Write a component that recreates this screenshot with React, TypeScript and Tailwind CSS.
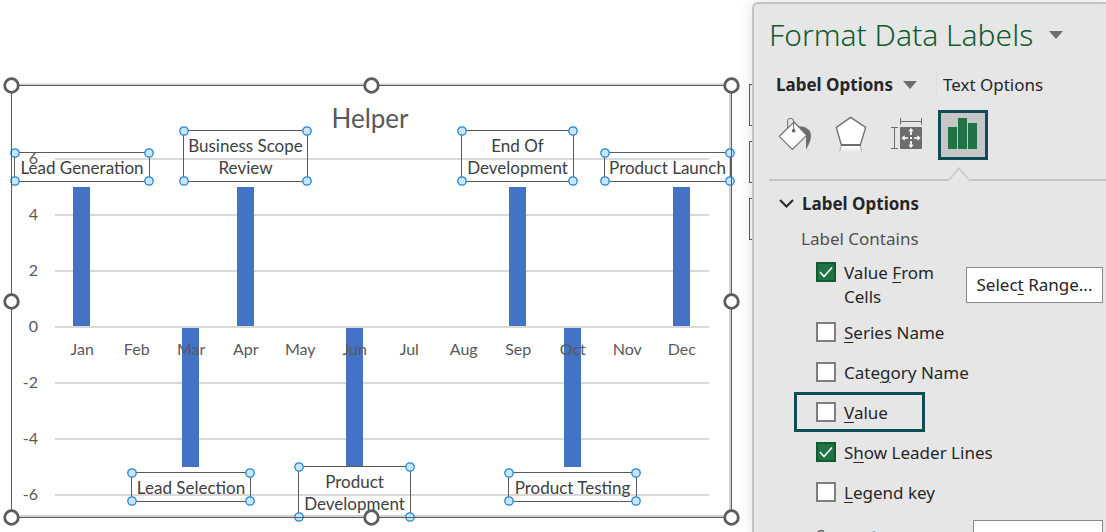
import { useState } from "react";
import type { ReactNode } from "react";

const MONTHS = ["Jan", "Feb", "Mar", "Apr", "May", "Jun", "Jul", "Aug", "Sep", "Oct", "Nov", "Dec"];
const TICKS = [6, 4, 2, 0, -2, -4, -6];

const PLOT_LEFT = 55;
const PLOT_WIDTH = 654;
const ZERO_Y = 250;
const UNIT = 28;

const BARS = [
  { month: 0, value: 5 },
  { month: 2, value: -5 },
  { month: 3, value: 5 },
  { month: 5, value: -5 },
  { month: 8, value: 5 },
  { month: 9, value: -5 },
  { month: 11, value: 5 },
];

const DATA_LABELS = [
  { lines: ["Lead Generation"], x: 15, y: 76, w: 134, h: 28 },
  { lines: ["Lead Selection"], x: 132, y: 396, w: 118, h: 28 },
  { lines: ["Business Scope", "Review"], x: 184, y: 54, w: 123, h: 50 },
  { lines: ["Product", "Development"], x: 299, y: 390, w: 111, h: 50 },
  { lines: ["End Of", "Development"], x: 462, y: 54, w: 111, h: 50 },
  { lines: ["Product Testing"], x: 509, y: 396, w: 127, h: 28 },
  { lines: ["Product Launch"], x: 605, y: 76, w: 125, h: 28 },
];

const FRAME_HANDLES = [
  [11, 8], [371, 8], [731, 8],
  [11, 224], [731, 224],
  [11, 440], [371, 440], [731, 440],
];

const centerOf = (month: number) => PLOT_LEFT + (PLOT_WIDTH / 12) * (month + 0.5);

const HelperChart = () => (
  <svg
    viewBox="0 0 749 455"
    className="min-w-0 flex-1 self-start font-['Lato','Liberation_Sans',sans-serif]"
    role="img"
    aria-label="Helper"
  >
    <path d="M11 7.5H730V439H11" fill="none" stroke="#d0d0d0" strokeWidth="2" />

    {/* Gridlines */}
    {TICKS.map((t) => (
      <rect key={t} x={PLOT_LEFT} y={ZERO_Y - t * UNIT - 1} width={PLOT_WIDTH} height="2" fill="#d9d9d9" />
    ))}

    {/* Bars */}
    {BARS.map((b) => (
      <rect
        key={b.month}
        x={Math.round(centerOf(b.month) - 9)}
        y={b.value > 0 ? ZERO_Y - b.value * UNIT : ZERO_Y + 1}
        width="17"
        height={Math.abs(b.value) * UNIT - 1}
        fill="#4472c4"
      />
    ))}

    <text x="370" y="51" textAnchor="middle" fontSize="26" fill="#595959">
      Helper
    </text>

    {/* Axis text */}
    {TICKS.map((t) => (
      <text key={t} x="38" y={ZERO_Y - t * UNIT + 5} textAnchor="end" fontSize="16" fill="#595959">
        {t}
      </text>
    ))}
    {MONTHS.map((m, i) => (
      <text key={m} x={centerOf(i)} y="278" textAnchor="middle" fontSize="16" fill="#595959">
        {m}
      </text>
    ))}

    {/* Data labels */}
    {DATA_LABELS.map((l) => (
      <g key={l.x}>
        <rect x={l.x - 0.5} y={l.y - 0.5} width={l.w + 1} height={l.h + 1} fill="none" stroke="#595959" />
        {l.lines.map((line, i) => (
          <text
            key={line}
            x={l.x + l.w / 2}
            y={l.y + 21 + i * 22}
            textAnchor="middle"
            fontSize="17"
            fill="#404040"
          >
            {line}
          </text>
        ))}
        {[l.x, l.x + l.w].map((cx) =>
          [l.y, l.y + l.h].map((cy) => (
            <circle key={`${cx}-${cy}`} cx={cx} cy={cy} r="4.2" fill="#cce4f5" stroke="#1a86d9" strokeWidth="1.3" />
          ))
        )}
      </g>
    ))}

    {/* Selection frame */}
    <rect x="11.5" y="8.5" width="720" height="432" fill="none" stroke="#5c5c5c" />
    {FRAME_HANDLES.map(([x, y]) => (
      <circle key={`${x}-${y}`} cx={x + 0.5} cy={y + 0.5} r="6.8" fill="#fff" stroke="#5c5c5c" strokeWidth="2.8" />
    ))}
  </svg>
);

const FillIcon = () => (
  <svg viewBox="24 36 102 102" className="h-[34px] w-[34px]">
    <path d="M84 64C108 64 123 74 123 92C123 106 116 120 108 134V96Z" fill="#6d6d6d" />
    <path d="M72 51L110 91L67 133L28 94Z" fill="#fff" stroke="#6d6d6d" strokeWidth="3.5" />
    <path d="M53 70V46Q54 40 62 40Q71 40 71 50V76" fill="none" stroke="#6d6d6d" strokeWidth="3" />
    <circle cx="71" cy="77" r="5.5" fill="#6d6d6d" />
  </svg>
);

const EffectsIcon = () => (
  <svg viewBox="195 36 96 114" className="h-[38px] w-8">
    <defs>
      <linearGradient id="reflection" x1="0" y1="0" x2="0" y2="1">
        <stop offset="0" stopColor="#fff" />
        <stop offset="1" stopColor="#e6e6e6" />
      </linearGradient>
    </defs>
    <path d="M214 126H271L277 144H208Z" fill="url(#reflection)" />
    <path d="M214 126L209 142M271 126L276 142" stroke="#a8a8a8" strokeWidth="3" />
    <path d="M242 40L287 70L271 123H214L199 70Z" fill="#fff" stroke="#6d6d6d" strokeWidth="4" />
    <path d="M213 123H272" stroke="#6d6d6d" strokeWidth="6" />
  </svg>
);

const SizeIcon = () => (
  <svg viewBox="33 39 96 99" className="h-[33px] w-8">
    <path d="M61.5 42V62M124.5 42V62M61 52.5H125M33 70.5H54M33 133.5H54M43.5 70V134" stroke="#6d6d6d" strokeWidth="3" />
    <rect x="60" y="69" width="66" height="66" rx="3" fill="#6d6d6d" />
    <path d="M93 79V93M93 111V125M71 102H84M102 102H115" stroke="#fff" strokeWidth="5" />
    <path
      d="M93 72L101 82H85ZM93 132L101 122H85ZM64 102L74 94V110ZM122 102L112 94V110ZM90 99H96V105H90Z"
      fill="#fff"
    />
  </svg>
);

const SeriesIcon = () => (
  <svg viewBox="0 0 29 31" className="h-[31px] w-[29px] fill-[#217346]">
    <rect y="9" width="9" height="22" />
    <rect x="10" width="9" height="31" />
    <rect x="20" y="5" width="9" height="26" />
  </svg>
);

const Triangle = () => (
  <svg viewBox="0 0 14 8" className="h-2 w-3.5 fill-[#6d6d6d]">
    <path d="M0 0H14L7 8Z" />
  </svg>
);

type OptionProps = { id: string; checked: boolean; onToggle: () => void; children: ReactNode };

const Option = ({ id, checked, onToggle, children }: OptionProps) => (
  <div className="flex gap-2">
    <span className="mt-px grid h-5 w-5 shrink-0 place-items-center">
      <input
        id={id}
        type="checkbox"
        checked={checked}
        onChange={onToggle}
        className="col-start-1 row-start-1 h-5 w-5 appearance-none border-2 border-[#7f7f7f] bg-white checked:border-[#0e5c2f] checked:bg-[#217346]"
      />
      {checked && (
        <svg viewBox="0 0 14 12" className="pointer-events-none col-start-1 row-start-1 h-3 w-3.5">
          <path d="M1 6L5 10.500L13 1.500" fill="none" stroke="#fff" strokeWidth="1.5" />
        </svg>
      )}
    </span>
    <label htmlFor={id} className="leading-6">
      {children}
    </label>
  </div>
);

const Key = ({ children }: { children: ReactNode }) => (
  <span className="underline decoration-1 underline-offset-3">{children}</span>
);

const FormatPane = () => {
  const [on, setOn] = useState<Record<string, boolean>>({ cells: true, leader: true });
  const bind = (id: string) => ({
    id,
    checked: !!on[id],
    onToggle: () => setOn({ ...on, [id]: !on[id] }),
  });

  return (
    <aside className="mt-0.5 flex w-[354px] shrink-0 flex-col rounded-tl-md border-t-2 border-l-2 border-[#c3c3c3] bg-[#e6e6e6] pl-[15px] text-[17px] text-[#262626] shadow-[0_0_14px_rgba(0,0,0,0.12)]">
      <header className="flex items-center gap-4 pt-2">
        <h1 className="text-[30px] leading-[46px] font-light text-[#0e5c2f]">Format Data Labels</h1>
        <button type="button" aria-label="Pane options">
          <Triangle />
        </button>
      </header>

      {/* Tabs */}
      <div className="mt-3.5 flex h-7 items-center pl-[7px]">
        <button type="button" className="flex items-center gap-2.5 font-bold">
          Label Options
          <Triangle />
        </button>
        <button type="button" className="ml-[19px] border-l border-[#dedede] pl-1.5">
          Text Options
        </button>
      </div>

      <div className="mt-3 flex h-[50px] items-start pl-[9px]">
        <button type="button" aria-label="Fill &amp; Line" className="mt-[7px] mr-[23px]">
          <FillIcon />
        </button>
        <button type="button" aria-label="Effects" className="mt-1.5 mr-6">
          <EffectsIcon />
        </button>
        <button type="button" aria-label="Size &amp; Properties" className="mt-[7px] mr-[15px]">
          <SizeIcon />
        </button>
        <button
          type="button"
          aria-label="Label Options"
          className="flex h-[50px] w-[50px] border-3 border-[#0f4c55] bg-[#c6c6c6] pt-[5px] pl-[7px]"
        >
          <SeriesIcon />
        </button>
      </div>

      {/* Divider with a notch under the active icon */}
      <div className="mt-[7px] flex items-end">
        <span className="h-0.5 w-[179px] bg-[#c3c3c3]" />
        <svg viewBox="0 0 22 14" className="h-3.5 w-[22px]">
          <path d="M0 13H1L11 1L21 13H22" fill="none" stroke="#c8c8c8" strokeWidth="1.5" />
        </svg>
        <span className="h-0.5 flex-1 bg-[#c3c3c3]" />
      </div>

      <button type="button" className="mt-[9px] flex items-center gap-2 pl-2.5 leading-7 font-bold">
        <svg viewBox="0 0 15 9" className="h-[9px] w-[15px]">
          <path d="M1 1L7.500 7.500L14 1" fill="none" stroke="#262626" strokeWidth="2" />
        </svg>
        Label Options
      </button>

      <p className="mt-[9px] pl-8 leading-6 text-[#505050]">Label Contains</p>

      <div className="mt-2.5 flex justify-between pr-[3px] pl-[47px]">
        <div className="w-[120px]">
          <Option {...bind("cells")}>
            Value <Key>F</Key>rom Cells
          </Option>
        </div>
        <button type="button" className="mt-1.5 h-9 w-[137px] border border-[#8a8a8a] bg-white">
          Selec<Key>t</Key> Range...
        </button>
      </div>

      <div className="mt-3 flex flex-col gap-4 pl-[47px]">
        <Option {...bind("series")}>
          <Key>S</Key>eries Name
        </Option>
        <Option {...bind("category")}>
          Cate<Key>g</Key>ory Name
        </Option>
        <div className="-mt-[9px] -mb-[7px] -ml-[22px] h-10 w-[131px] border-3 border-[#0f4c55] pt-1.5 pl-[19px]">
          <Option {...bind("value")}>
            <Key>V</Key>alue
          </Option>
        </div>
        <Option {...bind("leader")}>
          S<Key>h</Key>ow Leader Lines
        </Option>
        <Option {...bind("legend")}>
          <Key>L</Key>egend key
        </Option>
      </div>

      <div className="mt-[15px] flex shrink-0 justify-between pr-[3px] pl-[47px]">
        <label htmlFor="separator" className="pt-1 leading-6 text-[#505050]">
          Separator
        </label>
        <select id="separator" className="h-9 w-[130px] appearance-none border border-[#8a8a8a] bg-white px-2">
          <option value=",">,</option>
        </select>
      </div>
    </aside>
  );
};

const App = () => (
  <div className="flex h-screen overflow-hidden bg-white font-['Noto_Sans','Open_Sans',sans-serif]">
    <main className="flex min-w-0 flex-1 pt-[77px]">
      <HelperChart />
      {/* Cells that run on under the pane */}
      <div className="mt-[7px] flex w-[3px] flex-col gap-[15px]">
        {[0, 1, 2].map((i) => (
          <span key={i} className="h-[42px] border border-r-0 border-[#5c5c5c]" />
        ))}
      </div>
    </main>
    <FormatPane />
  </div>
);

export default App;
